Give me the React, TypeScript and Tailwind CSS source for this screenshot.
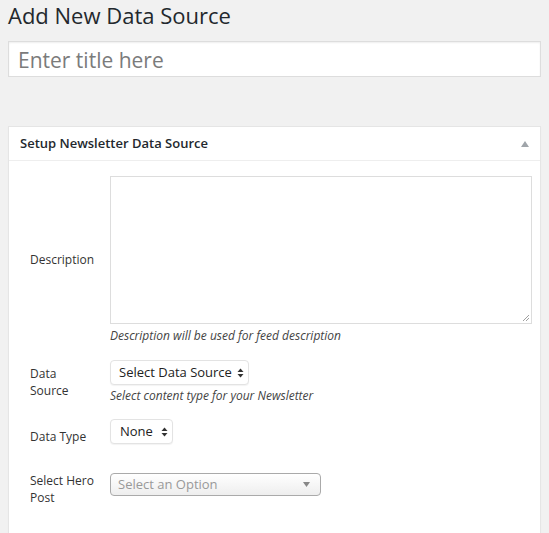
import React from "react";

const UpDown = () => (
  <svg width="7" height="10" viewBox="0 0 7 10" className="ml-[5px] shrink-0">
    <path d="M3.5 0.5 L6.5 4 L0.5 4 Z" fill="#333" />
    <path d="M3.5 9.5 L6.5 6 L0.5 6 Z" fill="#333" />
  </svg>
);

export default function App() {
  return (
    <div
      className="w-[549px] h-[533px] overflow-hidden bg-[#f1f1f1] text-[#23282d]"
      style={{ fontFamily: '"Open Sans", "Noto Sans", sans-serif' }}
    >
      <div className="px-[8px]">
        <h1 className="text-[22px] leading-[30px] font-normal text-[#23282d]">
          Add New Data Source
        </h1>
        <div className="mt-[11px] h-[36px] bg-white border border-[#dddddd] shadow-[inset_0_1px_2px_rgba(0,0,0,0.07)] flex items-center pl-[9px] pt-[3px] text-[21px] text-[#7b7b7b]">
          Enter title here
        </div>

        <div className="mt-[49px] bg-white border border-[#e5e5e5] shadow-[0_1px_1px_rgba(0,0,0,0.04)] h-[420px]">
          <div className="h-[34px] border-b border-[#eeeeee] flex items-center justify-between pl-[11px] pr-[11px]">
            <span className="text-[13px] font-semibold text-[#23282d]">
              Setup Newsletter Data Source
            </span>
            <svg width="8" height="6" viewBox="0 0 8 6">
              <path d="M4 0 L8 6 L0 6 Z" fill="#a0a5aa" />
            </svg>
          </div>

          <div className="pl-[21px] pr-[8px] text-[12px]">
            {/* Description */}
            <div className="mt-[15px] flex items-center">
              <div className="w-[80px] text-[12px] text-[#333]">Description</div>
              <div className="flex-1">
                <div className="relative h-[148px] border border-[#dddddd] bg-white">
                  <svg
                    width="7"
                    height="7"
                    viewBox="0 0 7 7"
                    className="absolute right-[2px] bottom-[2px]"
                  >
                    <path d="M1 7 L7 1 M4 7 L7 4" stroke="#888" strokeWidth="0.8" />
                  </svg>
                </div>
                <div className="mt-[4px] leading-[16px] italic text-[#444]">
                  Description will be used for feed description
                </div>
              </div>
            </div>

            {/* Data Source */}
            <div className="mt-[16px] flex items-center">
              <div className="w-[80px] leading-[17px] text-[#333]">
                Data
                <br />
                Source
              </div>
              <div className="flex-1">
                <div className="inline-flex items-center whitespace-nowrap h-[25px] pl-[8px] pr-[4px] border border-[#e3e3e3] rounded-[4px] bg-white text-[13px] text-[#222] shadow-[0_1px_1px_rgba(0,0,0,0.05)]">
                  Select Data Source
                  <UpDown />
                </div>
                <div className="mt-[3px] leading-[16px] italic text-[#444]">
                  Select content type for your Newsletter
                </div>
              </div>
            </div>

            {/* Data Type */}
            <div className="mt-[15px] flex items-start">
              <div className="w-[80px] mt-[9px] leading-[17px] text-[#333]">Data Type</div>
              <div className="inline-flex items-center whitespace-nowrap h-[25px] pl-[9px] pr-[4px] border border-[#e3e3e3] rounded-[4px] bg-white text-[13px] text-[#222] shadow-[0_1px_1px_rgba(0,0,0,0.05)]">
                None
                <span className="w-[3px]" />
                <UpDown />
              </div>
            </div>

            {/* Hero post */}
            <div className="mt-[27px] flex items-start">
              <div className="w-[80px] leading-[17px] text-[#333]">
                Select Hero
                <br />
                Post
              </div>
              <div className="mt-[1px] flex items-center justify-between h-[23px] w-[211px] pl-[7px] pr-[10px] border border-[#aaaaaa] rounded-[4px] bg-gradient-to-b from-white to-[#eeeeee] text-[13px] text-[#999]">
                Select an Option
                <svg width="7" height="5" viewBox="0 0 7 5">
                  <path d="M0 0 L7 0 L3.5 5 Z" fill="#888" />
                </svg>
              </div>
            </div>
          </div>
        </div>
      </div>
    </div>
  );
}
